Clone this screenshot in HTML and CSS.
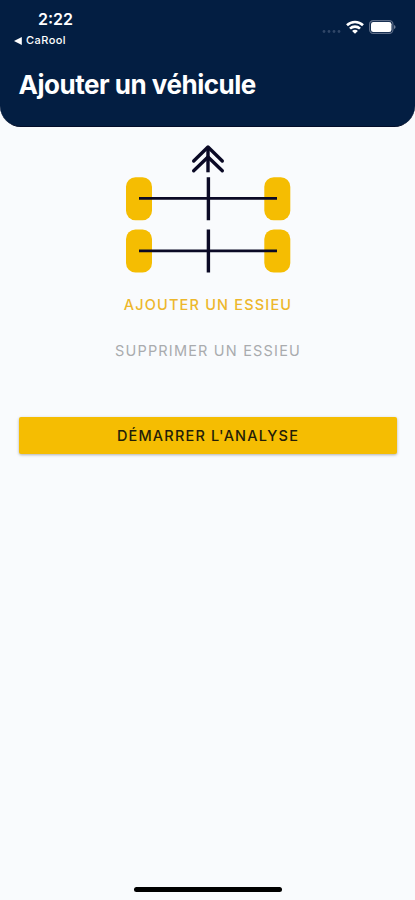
FILE: index.html
```html
<!DOCTYPE html>
<html lang="fr">
<head>
<meta charset="utf-8">
<title>Ajouter un véhicule</title>
<link rel="stylesheet" href="styles.css">
</head>
<body>
<div class="screen">
  <header class="header">
    <div class="status">
      <div class="status-left">
        <span class="time">2:22</span>
        <div class="back">
          <svg width="8" height="8" viewBox="0 0 8 8"><path d="M0 4 7.8 0V8Z" fill="#fff"/></svg>
          <span>CaRool</span>
        </div>
      </div>
      <div class="status-right">
        <svg class="signal" width="19" height="5" viewBox="0 0 19 5" fill="#304667"><circle cx="2" cy="2.5" r="1.4"/><circle cx="7" cy="2.5" r="1.4"/><circle cx="12" cy="2.5" r="1.4"/><circle cx="17" cy="2.5" r="1.4"/></svg>
        <svg class="wifi" width="18" height="14" viewBox="0 0 18 14" fill="none" stroke="#fff" stroke-width="2.6"><path d="M1 5.2A11.5 11.5 0 0 1 17 5.2M4 8.6A7.2 7.2 0 0 1 14 8.6"/><path d="M9 13.8 6.1 10.9A4 4 0 0 1 11.9 10.9Z" fill="#fff" stroke="none"/></svg>
        <svg class="battery" width="28" height="14" viewBox="0 0 28 14"><rect x=".6" y=".6" width="23.3" height="12.8" rx="3.6" fill="none" stroke="#5d6d88" stroke-width="1.2"/><rect x="2" y="2" width="20.5" height="10" rx="2.3" fill="#fff"/><path d="M25 5Q26.6 5.5 26.6 7T25 9Z" fill="#6e7d95"/></svg>
      </div>
    </div>
    <h1 class="title">Ajouter un véhicule</h1>
  </header>
  <main class="content">
    <svg class="axles" width="168" height="130" viewBox="0 0 168 130">
      <g fill="#f5bd02">
        <rect x="2" y="34.3" width="26" height="43" rx="9.5"/><rect x="140.3" y="34.3" width="26" height="43" rx="9.5"/>
        <rect x="2" y="86.5" width="26" height="43" rx="9.5"/><rect x="140.3" y="86.5" width="26" height="43" rx="9.5"/>
      </g>
      <g fill="none" stroke="#0b0a26">
        <path stroke-width="3.4" d="M84.4 34.3V77.3M84.4 86.5V129.5"/>
        <path stroke-width="2.8" d="M15 55.4H153M15 107.9H153"/>
        <path stroke-width="3.4" d="M84 4V29.3"/>
        <path stroke-width="3.4" stroke-linecap="round" stroke-linejoin="round" d="M69.7 18 84 4 98.3 18M69.7 27.7 84 14 98.3 27.7"/>
      </g>
    </svg>
    <button class="link add">AJOUTER UN ESSIEU</button>
    <button class="link remove">SUPPRIMER UN ESSIEU</button>
    <button class="start">DÉMARRER L'ANALYSE</button>
  </main>
  <div class="home"></div>
</div>
</body>
</html>
```
FILE: styles.css
```css
* { box-sizing: border-box; }
body { margin: 0; background: #f9fbfd; font-family: Inter, "Liberation Sans", sans-serif; }
svg { display: block; flex: none; }
button { border: 0; padding: 0; background: none; font-family: inherit; white-space: nowrap; }
.screen { height: 900px; display: flex; flex-direction: column; align-items: center; overflow: hidden; }
.header { width: 100%; height: 127px; background: #031e42; border-radius: 0 0 21px 21px; border-bottom: 1px solid #020d29; color: #fff; }
.status { height: 56px; display: flex; justify-content: space-between; padding: 9px 18px 0 14px; }
.time { display: block; margin-left: 24px; font-size: 16px; line-height: 20px; font-weight: 600; }
.back { display: flex; align-items: center; gap: 4px; margin-top: 4px; font-size: 11px; line-height: 15px; font-weight: 500; letter-spacing: .45px; }
.status-right { display: flex; align-items: flex-start; padding-top: 11px; }
.signal { margin-top: 9px; }
.wifi { margin-left: 5px; }
.battery { margin-left: 5px; }
.title { margin: 13px 0 0 18.5px; font-size: 26px; line-height: 32px; font-weight: 700; letter-spacing: -.48px; white-space: nowrap; }
.content { width: 100%; flex: 1; display: flex; flex-direction: column; align-items: center; padding: 16px 18px 0 19px; }
.link { height: 20px; font-size: 14.5px; line-height: 20px; letter-spacing: 1.18px; }
.add { margin-top: 22px; color: #edb72c; font-weight: 500; }
.remove { margin-top: 26px; color: #a9abae; }
.start { width: 100%; height: 37px; margin-top: 56px; background: #f5bd02; border-radius: 2px; color: #241d08; font-size: 14.5px; line-height: 37px; letter-spacing: 1.18px; font-weight: 500; box-shadow: 0 1px 3px rgba(0,0,0,.3); }
.home { width: 148px; height: 5px; margin-bottom: 8px; border-radius: 3px; background: #000; }
```
